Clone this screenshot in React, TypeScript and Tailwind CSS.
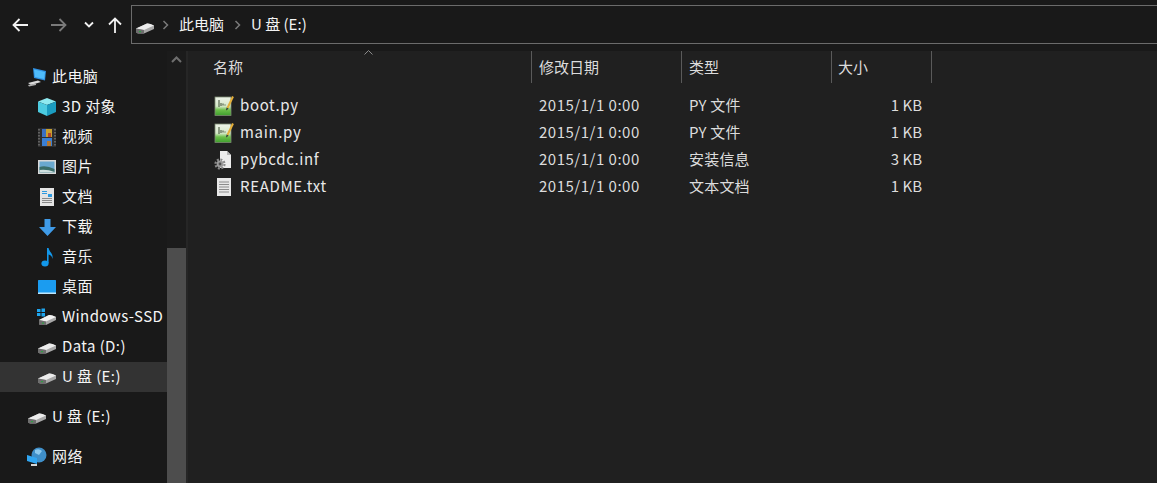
import { ReactNode } from "react";

const FONT = "font-['Noto_Sans_CJK_SC','Liberation_Sans',sans-serif]";

function Drive() {
  return (
    <svg width="20" height="14" viewBox="0 0 20 14">
      <path d="M1 8.5 L12 3.5 Q14 3 19 5.5 L19 9 L9 13.5 L3 13.5 Q1 13 1 11.5 Z" fill="#a8a8a8" />
      <path d="M1 8.5 L12 3.5 Q14 3 19 5.5 L9 10 Z" fill="#ececec" />
      <path d="M1 8.5 L9 10 L9 13.5 L3 13.5 Q1 13 1 11.5 Z" fill="#6e6e6e" />
      <rect x="4" y="11" width="2" height="1.2" fill="#2ea043" />
    </svg>
  );
}

function Computer() {
  return (
    <svg width="20" height="20" viewBox="0 0 20 20">
      <path d="M6 1 L19 4 L18 13.5 L7 11 Z" fill="#2f8fe0" />
      <path d="M7 2.5 L18 5 L17.2 12 L8 10 Z" fill="#4fbcfb" />
      <path d="M1 16 L11 13.5 L14 15 L4 18 Z" fill="#d9d9d9" />
      <path d="M1 18 L9 16.5 L9 18 L2 19.5 Z" fill="#b0b0b0" />
    </svg>
  );
}

function Cube() {
  return (
    <svg width="18" height="18" viewBox="0 0 18 18">
      <path d="M9 0 L18 3.5 L9 7 L0 3.5 Z" fill="#8feaf0" />
      <path d="M0 3.5 L9 7 L9 18 L0 14 Z" fill="#4ccbe0" />
      <path d="M18 3.5 L9 7 L9 18 L18 14 Z" fill="#1b9cc0" />
    </svg>
  );
}

function Video() {
  return (
    <svg width="18" height="19" viewBox="0 0 18 19">
      <rect width="18" height="19" fill="#2e2e2e" />
      <path d="M1 1 V18 M17 1 V18" stroke="#777" strokeWidth="1.4" strokeDasharray="1.5 1.5" />
      <rect x="4" y="1" width="10" height="8" fill="#c9a02f" />
      <rect x="4" y="1" width="4" height="8" fill="#3a6fc4" />
      <rect x="10" y="5" width="3" height="4" fill="#b5452d" />
      <rect x="4" y="10" width="10" height="8" fill="#3a7fd4" />
      <rect x="9" y="13" width="4" height="5" fill="#b5762d" />
    </svg>
  );
}

function Picture() {
  return (
    <svg width="18" height="14" viewBox="0 0 18 14">
      <rect width="18" height="14" fill="#d8d8d8" />
      <rect x="1.5" y="1.5" width="15" height="11" fill="#6aa9d0" />
      <path d="M1.5 7 Q8 5 16.5 9 L16.5 12.5 L1.5 12.5 Z" fill="#3b6f6a" />
      <path d="M1.5 10 Q9 9 16.5 12 L16.5 12.5 L1.5 12.5 Z" fill="#cfe0e0" />
    </svg>
  );
}

function Doc() {
  return (
    <svg width="14" height="18" viewBox="0 0 14 18">
      <rect width="14" height="18" fill="#e4e4e4" />
      <rect x="2" y="3" width="5" height="1" fill="#2d9ae0" />
      <rect x="2" y="5" width="5" height="1" fill="#2d9ae0" />
      <rect x="8" y="6" width="4" height="3" fill="#2d9ae0" />
      <rect x="2" y="10" width="10" height="1" fill="#888" />
      <rect x="2" y="12" width="10" height="1" fill="#888" />
      <rect x="2" y="14" width="10" height="1" fill="#888" />
    </svg>
  );
}

function Download() {
  return (
    <svg width="17" height="17" viewBox="0 0 17 17">
      <path d="M5.5 0 H11.5 V8 H17 L8.5 17 L0 8 H5.5 Z" fill="#3f9be8" />
    </svg>
  );
}

function Music() {
  return (
    <svg width="13" height="19" viewBox="0 0 13 19">
      <ellipse cx="4" cy="15.5" rx="3.6" ry="3" fill="#1297ea" />
      <path d="M6 15 V0 H7.6 C8 4 12.5 5 11.5 11 C11 7.5 9 7 7.6 6.5 V15 Z" fill="#1297ea" />
    </svg>
  );
}

function Desktop() {
  return (
    <svg width="18" height="14" viewBox="0 0 18 14">
      <rect width="18" height="14" rx="0.5" fill="#1b9cf0" />
      <rect x="0" y="12.5" width="18" height="1.5" fill="#bfe6fb" />
    </svg>
  );
}

function WindowsDrive() {
  return (
    <svg width="20" height="18" viewBox="0 0 20 18">
      <path d="M0 1 H3.5 V4 H0 Z M4.5 0.5 H8 V4 H4.5 Z M0 5 H3.5 V8 H0 Z M4.5 5 H8 V8.5 H4.5 Z" fill="#1ea5ee" />
      <path d="M2 12 L12 7 Q14 6.5 19 9 L19 12 L9 17 L3 17 Q2 16.5 2 15 Z" fill="#a8a8a8" />
      <path d="M2 12 L12 7 Q14 6.5 19 9 L9 13.5 Z" fill="#f2f2f2" />
      <path d="M2 12 L9 13.5 L9 17 L3 17 Q2 16.5 2 15 Z" fill="#6e6e6e" />
      <rect x="5" y="14.5" width="2" height="1.2" fill="#2ea043" />
    </svg>
  );
}

function Network() {
  return (
    <svg width="20" height="20" viewBox="0 0 20 20">
      <circle cx="12" cy="8" r="7.5" fill="#3f8fc9" />
      <path d="M8 3 Q12 1 15 4 L12 8 L8 6 Z" fill="#8cc9ee" />
      <path d="M0 8 L10 11 L10 17 L0 14 Z" fill="#30a6f2" />
      <rect x="4" y="17" width="6" height="2" fill="#d5d5d5" />
    </svg>
  );
}

function PyFile() {
  return (
    <svg width="20" height="20" viewBox="0 0 20 20">
      <defs>
        <linearGradient id="pyFill" x1="0" y1="0" x2="0" y2="1">
          <stop offset="0" stopColor="#eef3ea" />
          <stop offset="0.5" stopColor="#d5e8c8" />
          <stop offset="0.7" stopColor="#6cc04a" />
          <stop offset="1" stopColor="#3f9e2e" />
        </linearGradient>
      </defs>
      <rect x="1" y="1" width="16" height="18.5" fill="url(#pyFill)" stroke="#7c8a70" strokeWidth="0.8" />
      <path d="M5 4 V11 M7 7 V10 M9 7.5 V9.5 M11 8.5 V9.5" stroke="#3a4a33" strokeWidth="1" />
      <path d="M19 0.5 L13.5 12" stroke="#e5b03a" strokeWidth="2" />
      <path d="M12.6 11.5 L12 14.5 L14.6 12.8 Z" fill="#333" />
    </svg>
  );
}

function InfFile() {
  return (
    <svg width="20" height="20" viewBox="0 0 20 20">
      <path d="M6 1 H13 L17 5 V18 H6 Z" fill="#ececec" />
      <path d="M13 1 L17 5 H13 Z" fill="#b5b5b5" />
      <circle cx="6" cy="14" r="4.5" fill="none" stroke="#8a8a8a" strokeWidth="2.2" strokeDasharray="2 1.5" />
      <circle cx="6" cy="14" r="3.4" fill="#9a9a9a" />
      <circle cx="6" cy="14" r="1.4" fill="#4c4c4c" />
    </svg>
  );
}

function TxtFile() {
  return (
    <svg width="14" height="18" viewBox="0 0 14 18">
      <rect width="14" height="18" fill="#e8e8e8" />
      <path d="M2 4 H12 M2 6.5 H12 M2 9 H12 M2 11.5 H12 M2 14 H12" stroke="#8c8c8c" strokeWidth="1" />
    </svg>
  );
}

function NavRow({ icon, label, active, top }: { icon: ReactNode; label: string; active?: boolean; top?: boolean }) {
  return (
    <div className={`flex h-[30px] items-center ${top ? "pl-[27px]" : "pl-[37px]"} ${active ? "bg-[#333333]" : ""}`}>
      <span className="flex w-[20px] justify-center">{icon}</span>
      <span className="ml-[5px] whitespace-nowrap pb-[2px] text-[15px] tracking-[0.4px] text-[#f5f5f5]">{label}</span>
    </div>
  );
}

function Divider() {
  return <span className="h-[32px] w-px bg-[#5a5a5a]" />;
}

const files = [
  { name: "boot.py", type: "PY 文件", size: "1 KB", icon: <PyFile /> },
  { name: "main.py", type: "PY 文件", size: "1 KB", icon: <PyFile /> },
  { name: "pybcdc.inf", type: "安装信息", size: "3 KB", icon: <InfFile /> },
  { name: "README.txt", type: "文本文档", size: "1 KB", icon: <TxtFile /> },
];

export default function App() {
  return (
    <div className={`flex h-[483px] w-[1157px] flex-col overflow-hidden bg-[#191919] ${FONT}`}>
      <div className="flex h-[51px] shrink-0 items-start pt-[5px]">
        <div className="flex h-[39px] w-[131px] shrink-0 items-center">
          <svg width="16" height="14" viewBox="0 0 16 14" className="ml-[12px]" fill="none" stroke="#f2f2f2" strokeWidth="1.8">
            <path d="M16 7 H1.5 M7.5 1 L1.5 7 L7.5 13" />
          </svg>
          <svg width="16" height="14" viewBox="0 0 16 14" className="ml-[23px]" fill="none" stroke="#7a7a7a" strokeWidth="1.8">
            <path d="M0 7 H14.5 M8.5 1 L14.5 7 L8.5 13" />
          </svg>
          <svg width="10" height="7" viewBox="0 0 10 7" className="ml-[17px]" fill="none" stroke="#f2f2f2" strokeWidth="1.8">
            <path d="M1 1.5 L5 5.5 L9 1.5" />
          </svg>
          <svg width="14" height="16" viewBox="0 0 14 16" className="ml-[14px]" fill="none" stroke="#f2f2f2" strokeWidth="1.8">
            <path d="M7 16 V1.5 M1 7.5 L7 1.5 L13 7.5" />
          </svg>
        </div>
        <div className="flex h-[39px] flex-1 items-center border border-r-0 border-[#6b6b6b] bg-[#191919] pl-[3px] text-[15px] text-[#f2f2f2]">
          <span className="pt-[5px]">
            <Drive />
          </span>
          <svg width="7" height="10" viewBox="0 0 7 10" className="ml-[7px]" fill="none" stroke="#7a7a7a" strokeWidth="1.5">
            <path d="M1.5 1 L5.5 5 L1.5 9" />
          </svg>
          <span className="ml-[10px]">此电脑</span>
          <svg width="7" height="10" viewBox="0 0 7 10" className="ml-[10px]" fill="none" stroke="#7a7a7a" strokeWidth="1.5">
            <path d="M1.5 1 L5.5 5 L1.5 9" />
          </svg>
          <span className="ml-[10px]">U 盘 (E:)</span>
        </div>
      </div>
      <div className="flex min-h-0 flex-1">
        <div className="flex w-[167px] shrink-0 flex-col pt-[11px]">
          <NavRow top icon={<Computer />} label="此电脑" />
          <NavRow icon={<Cube />} label="3D 对象" />
          <NavRow icon={<Video />} label="视频" />
          <NavRow icon={<Picture />} label="图片" />
          <NavRow icon={<Doc />} label="文档" />
          <NavRow icon={<Download />} label="下载" />
          <NavRow icon={<Music />} label="音乐" />
          <NavRow icon={<Desktop />} label="桌面" />
          <NavRow icon={<WindowsDrive />} label="Windows-SSD" />
          <NavRow icon={<Drive />} label="Data (D:)" />
          <NavRow active icon={<Drive />} label="U 盘 (E:)" />
          <div className="h-[10px]" />
          <NavRow top icon={<Drive />} label="U 盘 (E:)" />
          <div className="h-[10px]" />
          <NavRow top icon={<Network />} label="网络" />
        </div>
        <div className="flex w-[19px] shrink-0 flex-col bg-[#1b1b1b]">
          <div className="flex h-[197px] justify-center pt-[5px]">
            <svg width="11" height="7" viewBox="0 0 11 7" fill="none" stroke="#6e6e6e" strokeWidth="2">
              <path d="M1 6 L5.5 1.5 L10 6" />
            </svg>
          </div>
          <div className="flex-1 bg-[#4d4d4d]" />
        </div>
        <div className="w-[2px] shrink-0 bg-[#262626]" />
        <div className="flex-1 bg-[#202020] text-[15px] text-[#dcdcdc]">
          <div className="relative flex h-[32px] items-center">
            <span className="absolute left-[176px] top-[-1px]">
              <svg width="9" height="5" viewBox="0 0 9 5" fill="none" stroke="#8a8a8a" strokeWidth="1">
                <path d="M0.5 4.5 L4.5 0.5 L8.5 4.5" />
              </svg>
            </span>
            <span className="w-[343px] pl-[25px]">名称</span>
            <Divider />
            <span className="w-[149px] pl-[7px]">修改日期</span>
            <Divider />
            <span className="w-[149px] pl-[7px]">类型</span>
            <Divider />
            <span className="w-[99px] pl-[6px]">大小</span>
            <Divider />
          </div>
          <div className="flex flex-col pt-[9px]">
            {files.map((f) => (
              <div key={f.name} className="flex h-[27px] items-center">
                <span className="flex w-[51px] justify-center pl-[21px]">{f.icon}</span>
                <span className="w-[293px] pl-[1px] tracking-[0.65px] text-[#e8e8e8]">{f.name}</span>
                <span className="w-[150px] pl-[7px] tracking-[0.5px]">2015/1/1 0:00</span>
                <span className="w-[150px] pl-[7px] tracking-[0.2px]">{f.type}</span>
                <span className="w-[90px] text-right">{f.size}</span>
              </div>
            ))}
          </div>
        </div>
      </div>
    </div>
  );
}
